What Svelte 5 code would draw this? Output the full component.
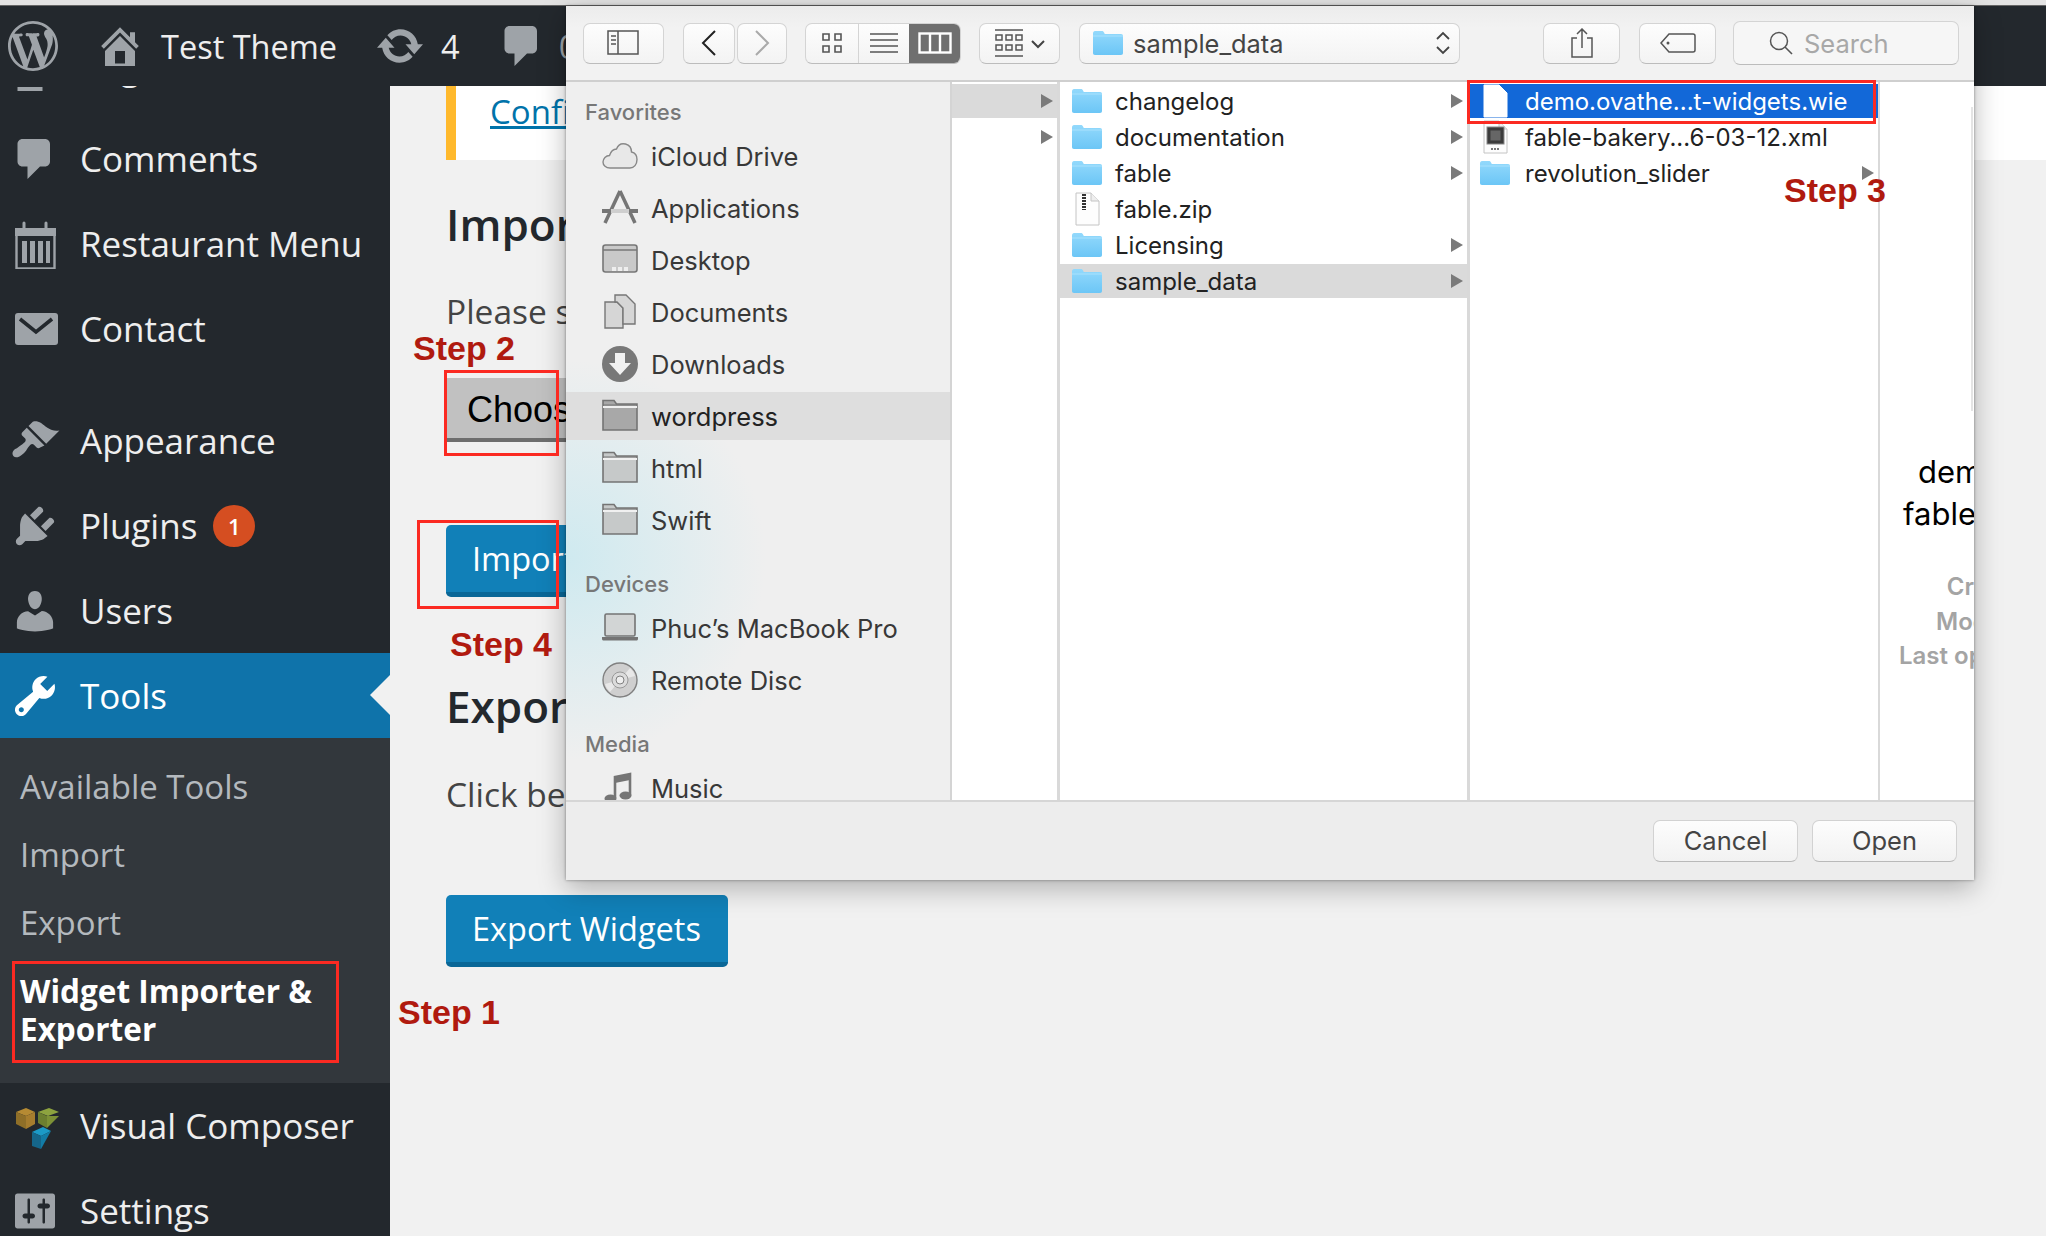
<script>
  const menuTop = [
    { label: "Pages", icon: "M3 2h14v12H3zM3 15.200h10v1.600H3z" },
    { label: "Comments", icon: "M5 2h9c1.1 0 2 .9 2 2v7c0 1.1-.9 2-2 2h-2l-5 5v-5H5c-1.1 0-2-.9-2-2V4c0-1.1.9-2 2-2z" },
    { label: "Restaurant Menu", custom: "menu" },
    { label: "Contact", custom: "mail" },
  ];
  const menuMid = [
    { label: "Appearance", icon: "M14.48 11.06L7.41 3.99l1.5-1.5c.5-.56 2.3-.47 3.51.32 1.21.8 1.43 1.28 2.91 2.1 1.18.64 2.45 1.26 4.45.85zm-.71.71L6.7 4.7 4.93 6.47c-.39.39-.39 1.02 0 1.41l1.06 1.06c.39.39.39 1.03 0 1.42-.6.6-1.43 1.11-2.21 1.69-.35.26-.7.53-1.01.84C1.43 13.23 1 14.37 1 15.08c0 .38.16.74.43 1.02.27.27.63.43 1.01.43.71 0 1.84-.43 3.19-1.77.31-.31.58-.66.85-1.01.57-.78 1.08-1.61 1.69-2.21.39-.39 1.02-.39 1.41 0l1.06 1.06c.39.39 1.02.39 1.41 0z" },
    { label: "Plugins", badge: 1, icon: "M13.11 4.36L9.87 7.6 8 5.73l3.24-3.24c.35-.34 1.05-.2 1.56.32.52.51.66 1.21.31 1.55zm-8 1.77l.91-1.12 9.01 9.01-1.19.84c-.71.71-2.63 1.16-3.82 1.16H6.14L4.9 17.26c-.59.59-1.54.59-2.12 0-.59-.58-.59-1.53 0-2.12l1.24-1.24v-3.88c0-1.13.4-3.19 1.09-3.89zm7.26 3.97l3.24-3.24c.34-.35 1.04-.21 1.55.31.52.51.66 1.21.31 1.55l-3.24 3.25z" },
    { label: "Users", icon: "M10 9.25c-2.27 0-2.73-3.44-2.73-3.44C7 4.02 7.82 2 9.97 2c2.16 0 2.98 2.02 2.71 3.81 0 0-.41 3.44-2.68 3.44zm0 2.57L12.72 10c2.39 0 4.52 2.33 4.52 4.53v2.49s-3.65 1.13-7.24 1.13c-3.65 0-7.24-1.13-7.24-1.13v-2.49c0-2.25 1.94-4.48 4.47-4.48z" },
    { label: "Tools", active: true, icon: "M16.68 9.77c-1.34 1.34-3.3 1.67-4.95.99l-5.41 6.52c-.99.99-2.59.99-3.58 0s-.99-2.59 0-3.57l6.52-5.42c-.68-1.65-.35-3.61.99-4.95 1.28-1.28 3.12-1.62 4.72-1.06l-2.89 2.89 2.82 2.82 2.86-2.87c.53 1.58.18 3.39-1.08 4.65zM3.81 16.21c.4.39 1.04.39 1.43 0 .4-.4.4-1.04 0-1.43-.39-.4-1.03-.4-1.43 0-.39.39-.39 1.03 0 1.43z" },
  ];
  const menuEnd = [
    { label: "Visual Composer", custom: "vc" },
    { label: "Settings", icon: "M18 16V4c0-.55-.45-1-1-1H3c-.55 0-1 .45-1 1v12c0 .55.45 1 1 1h14c.55 0 1-.45 1-1zM8 11h1c.55 0 1 .45 1 1s-.45 1-1 1H8v1.5c0 .28-.22.5-.5.5s-.5-.22-.5-.5V13H6c-.55 0-1-.45-1-1s.45-1 1-1h1V5.5c0-.28.22-.5.5-.5s.5.22.5.5V11zm5-2h-1c-.55 0-1-.45-1-1s.45-1 1-1h1V5.5c0-.28.22-.5.5-.5s.5.22.5.5V7h1c.55 0 1 .45 1 1s-.45 1-1 1h-1v5.5c0 .28-.22.5-.5.5s-.5-.22-.5-.5V9z" },
  ];
  const wpLogo = "M20 10c0-5.51-4.49-10-10-10C4.48 0 0 4.49 0 10c0 5.52 4.48 10 10 10 5.51 0 10-4.48 10-10zM7.78 15.37L4.37 6.22c.55-.02 1.17-.08 1.17-.08.5-.06.44-1.13-.06-1.11 0 0-1.45.11-2.37.11-.18 0-.37 0-.58-.01C4.12 2.69 6.87 1.11 10 1.11c2.33 0 4.45.87 6.05 2.34-.68-.11-1.65.39-1.65 1.58 0 .74.45 1.36.9 2.1.35.61.55 1.36.55 2.46 0 1.49-1.4 5-1.4 5l-3.03-8.37c.54-.02.82-.17.82-.17.5-.05.44-1.25-.06-1.22 0 0-1.44.12-2.38.12-.87 0-2.33-.12-2.33-.12-.5-.03-.56 1.2-.06 1.22l.92.08 1.26 3.41zM17.41 10c.24-.64.74-1.87.43-4.25.7 1.29 1.05 2.71 1.05 4.25 0 3.29-1.73 6.24-4.4 7.78.97-2.59 1.94-5.2 2.92-7.78zM6.1 18.09C3.12 16.65 1.11 13.53 1.11 10c0-1.3.23-2.48.72-3.59C3.25 10.3 4.67 14.2 6.1 18.09zm4.03-6.63l2.58 6.98c-.86.29-1.76.45-2.71.45-.79 0-1.57-.11-2.29-.33.81-2.38 1.62-4.74 2.42-7.1z";
  const homeIcon = "M16 8.5l1.53 1.53-1.06 1.06L10 4.62l-6.47 6.47-1.06-1.06L10 2.5l4 4v-2h2v4zm-6-2.46l6 5.99V18H4v-5.97zM12 17v-5H8v5h4z";
  const updateIcon = "M10.2 3.28c3.53 0 6.43 2.61 6.92 6h2.08l-3.5 4-3.5-4h2.32c-.45-1.97-2.21-3.45-4.32-3.45-1.45 0-2.73.71-3.54 1.78L4.95 5.66C6.23 4.2 8.11 3.28 10.2 3.28zm-.4 13.44c-3.52 0-6.43-2.61-6.92-6H.8l3.5-4c1.17 1.33 2.33 2.67 3.5 4H5.48c.45 1.97 2.21 3.45 4.32 3.45 1.45 0 2.73-.71 3.54-1.78l1.71 1.95c-1.28 1.46-3.15 2.38-5.25 2.38z";
  const commentIcon = "M5 2h9c1.1 0 2 .9 2 2v7c0 1.1-.9 2-2 2h-2l-5 5v-5H5c-1.1 0-2-.9-2-2V4c0-1.1.9-2 2-2z";

  const sideGroups = [
    {
      title: "Favorites",
      items: [
        { label: "iCloud Drive", icon: "cloud" },
        { label: "Applications", icon: "apps" },
        { label: "Desktop", icon: "desktop" },
        { label: "Documents", icon: "docs" },
        { label: "Downloads", icon: "down" },
        { label: "wordpress", icon: "folder", selected: true },
        { label: "html", icon: "folder" },
        { label: "Swift", icon: "folder" },
      ],
    },
    {
      title: "Devices",
      items: [
        { label: "Phuc’s MacBook Pro", icon: "laptop" },
        { label: "Remote Disc", icon: "disc" },
      ],
    },
    { title: "Media", items: [{ label: "Music", icon: "music" }] },
  ];

  const sampleFiles = [
    { name: "changelog", kind: "dir" },
    { name: "documentation", kind: "dir" },
    { name: "fable", kind: "dir" },
    { name: "fable.zip", kind: "zip" },
    { name: "Licensing", kind: "dir" },
    { name: "sample_data", kind: "dir", open: true },
  ];
  const demoFiles = [
    { name: "demo.ovathe...t-widgets.wie", kind: "file", selected: true },
    { name: "fable-bakery...6-03-12.xml", kind: "xml" },
    { name: "revolution_slider", kind: "dir" },
  ];
</script>

{#snippet blueFolder()}
  <svg class="ficon" viewBox="0 0 30 24">
    <defs>
      <linearGradient id="fold" x1="0" y1="0" x2="0" y2="1">
        <stop offset="0" stop-color="#93d9fc" />
        <stop offset="1" stop-color="#6cc6f6" />
      </linearGradient>
    </defs>
    <path d="M0 2.5C0 1 .8 0 2 0h7c1 0 1.5.5 2 1.500l.8 1.500H28c1.300 0 2 .8 2 2V22c0 1.300-.7 2-2 2H2c-1.300 0-2-.7-2-2z" fill="url(#fold)" />
    <path d="M0 5h30" stroke="#a9e2fd" stroke-width="1" />
  </svg>
{/snippet}

{#snippet fileIcon(kind)}
  {#if kind === "dir"}
    {@render blueFolder()}
  {:else}
    <svg class="ficon tall" viewBox="0 0 30 34">
      <path d="M4 1h15l8 8v24H4z" fill={kind === "file" ? "#fff" : "#fdfdfd"} stroke={kind === "file" ? "#fff" : "#c4c4c4"} />
      {#if kind !== "file"}
        <path d="M19 1v8h8" fill="#eee" stroke="#c4c4c4" />
      {/if}
      {#if kind === "zip"}
        <path d="M12 2v16" stroke="#333" stroke-width="4" stroke-dasharray="2 1" />
      {:else if kind === "xml"}
        <rect x="7" y="7" width="17" height="17" fill="#3b3b3b" stroke="#888" />
        <rect x="10.500" y="10.500" width="10" height="10" fill="#666" />
        <path d="M11 29h9" stroke="#777" stroke-width="2" stroke-dasharray="2 1" />
      {/if}
    </svg>
  {/if}
{/snippet}

{#snippet sideIcon(kind, selected)}
  <svg class="sicon" viewBox="0 0 36 36">
    {#if kind === "cloud"}
      <path d="M8 30C4 30 1 27.500 1 24s3-6.500 6.500-6.500C9 13 11.500 11 14.500 11c1.500-4 5-6 9-5 3.500 1 6 4 6 8 3.500.7 5.500 3.500 5.500 7.500 0 5-3 8.500-7 8.500z" fill="#e8e8e8" stroke="#888" stroke-width="1.400" />
    {:else if kind === "apps"}
      <path d="M18 1L3 33M18 1l15 32" stroke="#757575" stroke-width="3.500" fill="none" />
      <path d="M0 19h9v4H0zM27 19h9v4h-9z" fill="#757575" />
      <path d="M9 19h18v4H9z" fill="#cfcfcf" />
    {:else if kind === "desktop"}
      <rect x="1" y="3" width="34" height="27" rx="2.500" fill="#c9c9c9" stroke="#777" stroke-width="1.600" />
      <path d="M1 8h34" stroke="#777" stroke-width="1.400" />
      <path d="M10 25h4v4h-4zM16 25h4v4h-4zM22 25h4v4h-4z" fill="#eee" />
    {:else if kind === "docs"}
      <path d="M3 8h12l6 6v20H3z" fill="#d6d6d6" stroke="#777" stroke-width="1.400" />
      <path d="M13 1h11l9 9v20H21V14l-6-6h-2z" fill="#d6d6d6" stroke="#777" stroke-width="1.400" />
    {:else if kind === "down"}
      <circle cx="18" cy="18" r="18" fill="#787878" />
      <path d="M13 7h10v10h6L18 29 7 17h6z" fill="#f1f1f1" />
    {:else if kind === "folder"}
      <path d="M1 6V2.500h11l2.500 3.500H35v26H1z" fill={selected ? "#a8a8a8" : "#c6c9c9"} stroke="#747474" stroke-width="1.600" />
      <path d="M1 9h34" stroke="#f0f0f0" stroke-width="2" />
      <path d="M1 7h34" stroke="#747474" stroke-width="1.200" />
    {:else if kind === "laptop"}
      <rect x="3" y="4" width="30" height="22" rx="1.500" fill="#d2d5d5" stroke="#747474" stroke-width="1.600" />
      <path d="M0 27h36v2c0 .8-.7 1.500-1.500 1.500h-33C.7 30.500 0 29.800 0 29z" fill="#747474" />
    {:else if kind === "disc"}
      <circle cx="18" cy="18" r="17" fill="#cfcfcf" stroke="#808080" stroke-width="1.400" />
      <path d="M18 18L28 6A16 16 0 0 1 33 14zM18 18L8 30A16 16 0 0 1 3 22z" fill="#e8e8e8" />
      <circle cx="18" cy="18" r="8" fill="#dcdcdc" stroke="#999" />
      <circle cx="18" cy="18" r="4" fill="#efefef" stroke="#808080" />
    {:else if kind === "music"}
      <path d="M13 28V7l15-3v21" fill="none" stroke="#757575" stroke-width="2.600" />
      <path d="M13 7l15-3v6l-15 3z" fill="#757575" />
      <ellipse cx="8.500" cy="28.500" rx="6" ry="4" fill="#757575" />
      <ellipse cx="23.500" cy="25.500" rx="6" ry="4" fill="#757575" />
    {/if}
  </svg>
{/snippet}

{#snippet wpIcon(item)}
  <span class="micon">
    {#if item.custom === "menu"}
      <svg viewBox="0 0 50 50">
        <rect x="6.500" y="10.500" width="38" height="39" fill="none" stroke="#9ea3a8" stroke-width="2.400" />
        <path d="M5 9h41v8H5z" fill="#9ea3a8" />
        <path d="M14 4v9M36 4v9" stroke="#9ea3a8" stroke-width="3" stroke-linecap="round" />
        <path d="M12 22h5v22h-5zM20 22h5v22h-5zM28 22h5v22h-5zM36 22h4v22h-4z" fill="#9ea3a8" />
      </svg>
    {:else if item.custom === "mail"}
      <svg viewBox="0 0 50 50">
        <rect x="5" y="9" width="43" height="32" rx="3" fill="#9ea3a8" />
        <path d="M10 15l16 13 16-13" fill="none" stroke="#23282d" stroke-width="3.600" />
      </svg>
    {:else if item.custom === "vc"}
      <svg viewBox="0 0 50 50">
        <path d="M6 11l10-4 9 4-9 4z" fill="#b58a33" />
        <path d="M6 11v12l10 5V15z" fill="#8f6f28" />
        <path d="M16 15v13l9-5V11z" fill="#a67d2e" />
        <path d="M28 11l11-4 10 4-11 4z" fill="#8da33f" />
        <path d="M28 11v11l9 5V15z" fill="#6c7f30" />
        <path d="M37 15v12l12-12z" fill="#7d9136" />
        <path d="M22 31l11-5 8 4-10 5z" fill="#1b9ac7" />
        <path d="M22 31v14l9 3V35z" fill="#15668a" />
        <path d="M31 35v13l10-18z" fill="#127ca6" />
      </svg>
    {:else}
      <svg viewBox="0 0 20 20"><path d={item.icon} fill="currentColor" /></svg>
    {/if}
  </span>
{/snippet}

{#snippet menuRow(item)}
  <li class="mrow" class:active={item.active}>
    {@render wpIcon(item)}
    <span class="mlabel">{item.label}</span>
    {#if item.badge}<span class="badge">{item.badge}</span>{/if}
  </li>
{/snippet}

<div class="page">
  <div class="topstrip"></div>

  <header class="adminbar">
    <svg class="bar-logo" viewBox="0 0 20 20"><path d={wpLogo} fill="#9ea3a8" /></svg>
    <svg class="bar-home" viewBox="0 0 20 20"><path d={homeIcon} fill="#9ea3a8" /></svg>
    <span class="bar-site">Test Theme</span>
    <svg class="bar-update" viewBox="0 0 20 20"><path d={updateIcon} fill="#9ea3a8" /></svg>
    <span class="bar-count">4</span>
    <svg class="bar-comment" viewBox="0 0 20 20"><path d={commentIcon} fill="#9ea3a8" /></svg>
    <span class="bar-zero">0</span>
  </header>

  <div class="body">
    <aside class="sidebar">
      <ul class="menu">
        {#each menuTop as item}{@render menuRow(item)}{/each}
        <li class="sep"></li>
        {#each menuMid as item}{@render menuRow(item)}{/each}
        <li class="submenu">
          <div class="sub">Available Tools</div>
          <div class="sub">Import</div>
          <div class="sub">Export</div>
          <div class="sub current">Widget Importer &amp; Exporter</div>
        </li>
        {#each menuEnd as item}{@render menuRow(item)}{/each}
      </ul>
    </aside>

    <main class="content">
      <div class="notice"><a href="#top">Configure</a></div>
      <h2 class="h-import">Import Widgets</h2>
      <p class="p-please">Please select a .wie file generated by the plugin.</p>
      <div class="choose">Choose File</div>
      <div class="wbtn b-import">Import Widgets</div>
      <h2 class="h-export">Export Widgets</h2>
      <p class="p-click">Click below to generate a .wie file for all active widgets.</p>
      <div class="wbtn b-export">Export Widgets</div>
    </main>
  </div>

  <section class="dialog">
    <div class="toolbar">
      <div class="tb w-side">
        <svg width="34" height="26" viewBox="0 0 34 26"><rect x="1" y="1" width="30" height="23" fill="none" stroke="#555" stroke-width="1.500" /><path d="M11 1v23M4 6h5M4 10h5M4 14h5" stroke="#555" stroke-width="1.500" /></svg>
      </div>
      <div class="tb w-back">
        <svg width="18" height="26" viewBox="0 0 18 26"><path d="M15 1L3 13l12 12" fill="none" stroke="#222" stroke-width="2" /></svg>
      </div>
      <div class="tb w-fwd">
        <svg width="18" height="26" viewBox="0 0 18 26"><path d="M3 1l12 12L3 25" fill="none" stroke="#aaa" stroke-width="2" /></svg>
      </div>
      <div class="seg">
        <div class="seg-a">
          <svg width="22" height="22" viewBox="0 0 22 22"><path d="M2 2h6v6H2zM14 2h6v6h-6zM2 14h6v6H2zM14 14h6v6h-6z" fill="none" stroke="#555" stroke-width="1.600" /></svg>
        </div>
        <div class="seg-b">
          <svg width="30" height="22" viewBox="0 0 30 22"><path d="M1 2h28M1 8h28M1 14h28M1 20h28" stroke="#555" stroke-width="1.400" /></svg>
        </div>
        <div class="seg-c">
          <svg width="34" height="22" viewBox="0 0 34 22"><rect x="1.500" y="1.500" width="31" height="19" fill="none" stroke="#fff" stroke-width="2.400" /><path d="M12 1v20M22 1v20" stroke="#fff" stroke-width="2.400" /></svg>
        </div>
      </div>
      <div class="tb w-arr">
        <svg width="52" height="28" viewBox="0 0 52 28"><path d="M1 1h28M1 27h28" stroke="#555" stroke-width="1.400" /><path d="M2 6h6v5H2zM12 6h6v5h-6zM22 6h6v5h-6zM2 16h6v5H2zM12 16h6v5h-6zM22 16h6v5h-6z" fill="none" stroke="#555" stroke-width="1.500" /><path d="M38 12l6 6 6-6" fill="none" stroke="#444" stroke-width="2" /></svg>
      </div>
      <div class="tb w-path">
        {@render blueFolder()}
        <span class="path-text">sample_data</span>
        <svg class="updown" width="16" height="26" viewBox="0 0 16 26"><path d="M2 9l6-6 6 6M2 17l6 6 6-6" fill="none" stroke="#444" stroke-width="1.800" /></svg>
      </div>
      <div class="tb w-share">
        <svg width="24" height="30" viewBox="0 0 24 30"><path d="M7 10H2v19h20V10h-5M12 20V1M7 6l5-5 5 5" fill="none" stroke="#555" stroke-width="1.500" /></svg>
      </div>
      <div class="tb w-tag">
        <svg width="36" height="22" viewBox="0 0 36 22"><path d="M9 2h24c1 0 2 1 2 2v14c0 1-1 2-2 2H9L1 11z" fill="none" stroke="#555" stroke-width="1.500" /><circle cx="8" cy="11" r="1.500" fill="#555" /></svg>
      </div>
      <div class="tb w-search">
        <svg width="24" height="24" viewBox="0 0 24 24"><circle cx="10" cy="10" r="8.500" fill="none" stroke="#555" stroke-width="1.500" /><path d="M16 16l7 7" stroke="#555" stroke-width="1.600" /></svg>
        <span class="search-text">Search</span>
      </div>
    </div>

    <div class="panes">
      <nav class="dside">
        {#each sideGroups as group}
          <div class="dtitle">{group.title}</div>
          {#each group.items as item}
            <div class="ditem" class:selected={item.selected}>
              {@render sideIcon(item.icon, item.selected)}
              <span>{item.label}</span>
            </div>
          {/each}
        {/each}
      </nav>

      <div class="col col0">
        <div class="frow open"><i class="tri"></i></div>
        <div class="frow"><i class="tri"></i></div>
      </div>

      <div class="col col1">
        {#each sampleFiles as f}
          <div class="frow" class:open={f.open}>
            {@render fileIcon(f.kind)}
            <span class="fname">{f.name}</span>
            {#if f.kind === "dir"}<i class="tri"></i>{/if}
          </div>
        {/each}
      </div>

      <div class="col col2">
        {#each demoFiles as f}
          <div class="frow" class:sel={f.selected}>
            {@render fileIcon(f.kind)}
            <span class="fname">{f.name}</span>
            {#if f.kind === "dir"}<i class="tri"></i>{/if}
          </div>
        {/each}
      </div>

      <div class="preview">
        <div class="thumb-edge"></div>
        <div class="pname p1">demo.ovathemes-widgets.wie</div>
        <div class="pname p2">fable-bakery-widgets.wie</div>
        <div class="meta">
          <div>Created</div>
          <div>Modified</div>
          <div>Last opened</div>
        </div>
      </div>
    </div>

    <div class="footer">
      <div class="fbtn">Cancel</div>
      <div class="fbtn">Open</div>
    </div>
  </section>

  <div class="redbox r2"></div>
  <div class="redbox r4"></div>
  <div class="redbox r1"></div>
  <div class="redbox r3"></div>
  <div class="step s1">Step 1</div>
  <div class="step s2">Step 2</div>
  <div class="step s3">Step 3</div>
  <div class="step s4">Step 4</div>
</div>

<style>
  :global(body) {
    margin: 0;
    background: #f1f1f1;
  }
  .page {
    position: relative;
    width: 2046px;
    height: 1236px;
    overflow: hidden;
    background: #f1f1f1;
    font-family: "Open Sans", sans-serif;
  }
  .topstrip {
    height: 5px;
    background: #e3e3e3;
    border-bottom: 1px solid #666;
  }
  .adminbar {
    position: relative;
    z-index: 2;
    height: 80px;
    background: #23282d;
    display: flex;
    align-items: center;
    color: #eee;
    font-size: 32.500px;
  }
  .bar-logo { width: 50px; height: 50px; margin-left: 8px; }
  .bar-home { width: 50px; height: 50px; margin-left: 37px; }
  .bar-site { margin-left: 16px; white-space: nowrap; }
  .bar-update { width: 50px; height: 50px; margin-left: 38px; }
  .bar-count { margin-left: 16px; }
  .bar-comment { width: 50px; height: 50px; margin-left: 37px; }
  .bar-zero { margin-left: 12px; color: #9ea3a8; }

  .body {
    display: flex;
  }
  .sidebar {
    width: 390px;
    height: 1150px;
    background: #23282d;
    overflow: hidden;
    flex: none;
  }
  .menu {
    list-style: none;
    margin: -55px 0 0;
    padding: 0;
  }
  .mrow {
    position: relative;
    height: 85px;
    display: flex;
    align-items: center;
    padding-left: 10px;
    color: #eee;
    font-size: 35px;
    white-space: nowrap;
  }
  /* the Pages row sits mostly under the admin bar */
  .mrow:first-child .mlabel {
    margin-top: -14px;
  }
  .micon {
    width: 50px;
    height: 50px;
    color: #9ea3a8;
    flex: none;
    margin-right: 20px;
  }
  .micon svg {
    display: block;
    width: 50px;
    height: 50px;
  }
  .sep {
    height: 27px;
  }
  .mrow.active {
    background: #0f73aa;
    color: #fff;
  }
  .mrow.active .micon {
    color: #fff;
  }
  .mrow.active::after {
    content: "";
    position: absolute;
    right: 0;
    top: 22px;
    border: 20px solid transparent;
    border-right-color: #f1f1f1;
    border-left-width: 0;
  }
  .badge {
    width: 42px;
    height: 42px;
    margin-left: 16px;
    border-radius: 50%;
    background: #d54e21;
    color: #fff;
    font-size: 22px;
    font-weight: 600;
    display: flex;
    align-items: center;
    justify-content: center;
  }
  .submenu {
    background: #32373c;
    padding: 15px 20px 18px;
  }
  .sub {
    height: 68px;
    line-height: 68px;
    font-size: 33px;
    color: #b4b9be;
  }
  .sub.current {
    height: auto;
    margin-top: 15px;
    line-height: 38px;
    padding-bottom: 17px;
    color: #fff;
    font-size: 31.500px;
    font-weight: 700;
    width: 330px;
  }

  .content {
    flex: 1;
    min-width: 0;
    padding-left: 56px;
  }
  .notice {
    height: 74px;
    box-sizing: border-box;
    border-left: 10px solid #ffb92c;
    background: #fff;
    padding-left: 34px;
    font-size: 33px;
    line-height: 52px;
  }
  .notice a {
    color: #0073aa;
  }
  h2 {
    margin: 0;
    font-size: 44px;
    font-weight: 600;
    color: #23282d;
    line-height: 60px;
  }
  p {
    margin: 0;
    font-size: 33.500px;
    line-height: 46px;
    color: #444;
  }
  .h-import { margin-top: 34px; }
  .p-please { margin-top: 34px; }
  .choose {
    margin-top: 44px;
    width: 420px;
    height: 60px;
    margin-left: 1px;
    padding-left: 20px;
    box-sizing: content-box;
    background: #c1c1c1;
    border-bottom: 4px solid #6e6e6e;
    color: #000;
    font: 36px/64px "Liberation Sans", sans-serif;
  }
  .wbtn {
    width: 256px;
    height: 67px;
    padding-left: 26px;
    box-sizing: content-box;
    border-bottom: 5px solid #0a6797;
    border-radius: 5px;
    background: #1180b8;
    color: #fff;
    font-size: 32.500px;
    line-height: 68px;
    white-space: nowrap;
  }
  .b-import { margin-top: 83px; }
  .h-export { margin-top: 79px; }
  .p-click { margin-top: 35px; }
  .b-export { margin-top: 78px; }

  .dialog {
    position: absolute;
    left: 566px;
    top: 6px;
    width: 1408px;
    height: 874px;
    z-index: 3;
    display: flex;
    flex-direction: column;
    background: #efefef;
    box-shadow: 0 8px 26px rgba(0, 0, 0, 0.28), 0 0 3px rgba(0, 0, 0, 0.4);
    font-family: Inter, "Liberation Sans", sans-serif;
    font-size: 24px;
  }
  .toolbar {
    height: 76px;
    flex: none;
    box-sizing: border-box;
    border-bottom: 2px solid #cfcfcf;
    background: linear-gradient(#ececec, #f2f2f2 30%);
    display: flex;
    align-items: center;
    padding-left: 17px;
  }
  .tb {
    height: 41px;
    box-sizing: border-box;
    border: 1px solid #d4d4d4;
    border-bottom-color: #bcbcbc;
    border-radius: 7px;
    background: linear-gradient(#fdfdfd, #f3f3f3);
    display: flex;
    align-items: center;
    justify-content: center;
    flex: none;
  }
  .w-side { width: 81px; }
  .w-back { width: 52px; margin-left: 19px; }
  .w-fwd { width: 50px; margin-left: 2px; }
  .seg {
    width: 156px;
    height: 41px;
    margin-left: 18px;
    box-sizing: border-box;
    display: flex;
    flex: none;
    border: 1px solid #d4d4d4;
    border-bottom-color: #bcbcbc;
    border-radius: 7px;
    overflow: hidden;
    background: linear-gradient(#fdfdfd, #f3f3f3);
  }
  .seg > div {
    display: flex;
    align-items: center;
    justify-content: center;
  }
  .seg-a { width: 52px; border-right: 1px solid #d4d4d4; }
  .seg-b { width: 50px; }
  .seg-c { flex: 1; background: #6f6f6f; }
  .w-arr { width: 81px; margin-left: 18px; }
  .w-path {
    width: 381px;
    margin-left: 19px;
    justify-content: flex-start;
    padding-left: 13px;
    color: #444;
  }
  .path-text {
    margin-left: 10px;
    font-size: 25.400px;
  }
  .updown {
    margin-left: auto;
    margin-right: 8px;
  }
  .w-share { width: 77px; margin-left: 83px; }
  .w-tag { width: 77px; margin-left: 19px; }
  .w-search {
    width: 226px;
    height: 44px;
    margin-left: 17px;
    justify-content: flex-start;
    padding-left: 35px;
    background: #f6f6f6;
  }
  .search-text {
    margin-left: 11px;
    color: #a8a8a8;
    font-size: 25.500px;
  }

  .panes {
    flex: 1;
    min-height: 0;
    display: flex;
    overflow: hidden;
    background: #fff;
  }
  .dside {
    width: 386px;
    flex: none;
    box-sizing: border-box;
    padding-top: 11px;
    overflow: hidden;
    background:
      radial-gradient(circle at 0 478px, rgba(196, 232, 240, 0.75), rgba(196, 232, 240, 0) 200px),
      #efefef;
    border-right: 2px solid #d4d4d4;
    color: #383838;
    font-size: 25.500px;
  }
  .dtitle {
    height: 38px;
    line-height: 38px;
    margin-bottom: 1px;
    padding-left: 19px;
    font-size: 22px;
    font-weight: 500;
    color: #777;
  }
  .dtitle:not(:first-child) {
    margin-top: 21px;
  }
  .ditem {
    height: 48px;
    margin-bottom: 4px;
    padding-left: 36px;
    display: flex;
    align-items: center;
    white-space: nowrap;
  }
  .ditem.selected {
    background: #dedede;
    color: #222;
  }
  .sicon {
    width: 36px;
    height: 36px;
    flex: none;
    margin-right: 13px;
  }

  .col {
    flex: none;
    box-sizing: border-box;
    border-right: 3px solid #d9d9d9;
    padding-top: 2px;
    color: #222;
  }
  .col0 { width: 108px; }
  .col1 { width: 410px; }
  .col2 { width: 410px; border-right-width: 2px; }
  .frow {
    position: relative;
    height: 34px;
    margin-bottom: 2px;
    display: flex;
    align-items: center;
    padding-left: 12px;
    white-space: nowrap;
  }
  .col2 .frow {
    padding-left: 10px;
  }
  .frow.open {
    background: #dadada;
  }
  .frow.sel {
    background: #1268d8;
    color: #fff;
  }
  .ficon {
    width: 30px;
    height: 24px;
    flex: none;
  }
  .ficon.tall {
    height: 34px;
  }
  .fname {
    margin-left: 13px;
  }
  .col2 .fname {
    margin-left: 15px;
  }
  .tri {
    position: absolute;
    right: 4px;
    top: 10px;
    border: 7px solid transparent;
    border-left: 12px solid #7a7a7a;
    border-right-width: 0;
  }
  .preview {
    position: relative;
    flex: 1;
    min-width: 0;
    overflow: hidden;
    color: #000;
    font-size: 31px;
  }
  .thumb-edge {
    position: absolute;
    right: 1px;
    top: 25px;
    height: 304px;
    width: 2px;
    background: #e4e4e4;
  }
  .pname {
    white-space: nowrap;
    line-height: 42px;
  }
  .p1 {
    margin-top: 369px;
    padding-left: 38px;
  }
  .p2 {
    padding-left: 23px;
  }
  .meta {
    margin-top: 35px;
    margin-left: 19px;
    width: 140px;
    text-align: right;
    color: #a4a4a4;
    font-size: 24px;
    font-weight: 600;
    line-height: 34.500px;
    white-space: nowrap;
  }

  .footer {
    height: 80px;
    flex: none;
    box-sizing: border-box;
    border-top: 2px solid #d6d6d6;
    background: #ededed;
    display: flex;
    justify-content: flex-end;
    align-items: center;
    gap: 14px;
    padding-right: 17px;
  }
  .fbtn {
    width: 145px;
    height: 42px;
    box-sizing: border-box;
    border: 1px solid #d2d2d2;
    border-bottom-color: #b9b9b9;
    border-radius: 7px;
    background: linear-gradient(#fdfdfd, #f2f2f2);
    color: #444;
    font-size: 25.500px;
    line-height: 40px;
    text-align: center;
  }

  .redbox {
    position: absolute;
    box-sizing: border-box;
    border: 3px solid #fb2a22;
    z-index: 4;
  }
  .r1 { left: 12px; top: 961px; width: 327px; height: 102px; }
  .r2 { left: 444px; top: 370px; width: 115px; height: 86px; }
  .r3 { left: 1467px; top: 80px; width: 409px; height: 44px; }
  .r4 { left: 417px; top: 520px; width: 142px; height: 89px; }
  .step {
    position: absolute;
    z-index: 5;
    color: #b01a0f;
    font: bold 34px/40px "Liberation Sans", sans-serif;
    white-space: nowrap;
  }
  .s1 { left: 398px; top: 992px; }
  .s2 { left: 413px; top: 328px; }
  .s3 { left: 1784px; top: 170px; }
  .s4 { left: 450px; top: 624px; }
</style>
